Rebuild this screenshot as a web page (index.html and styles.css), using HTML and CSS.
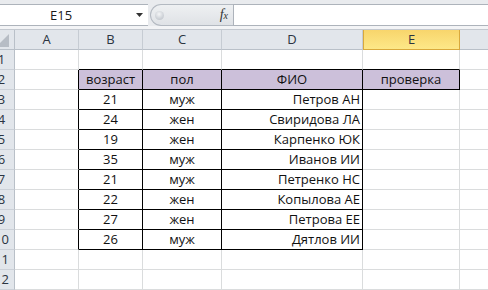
FILE: index.html
```html
<!DOCTYPE html>
<html lang="ru">
<head>
  <meta charset="UTF-8" />
  <title>Лист1 - Excel</title>
  <link rel="stylesheet" href="styles.css">
</head>
<body>
  <div class="formula-bar">
    <div class="name-box">
      <span class="cell-ref">E15</span>
      <svg class="caret" width="7" height="4" viewBox="0 0 7 4"><path d="M0 0h7L3.5 4z"/></svg>
    </div>
    <div class="fx-box">
      <span class="knob"></span>
      <span class="fx"><i>f</i><i class="x">x</i></span>
    </div>
    <div class="formula-input"></div>
  </div>
  <div class="strip"></div>

  <div class="sheet">
    <!-- column headers (F is mostly off screen) -->
    <div class="corner"><svg width="13" height="13" viewBox="0 0 13 13"><path d="M13 0v13H0z"/></svg></div>
    <div class="ch">A</div>
    <div class="ch">B</div>
    <div class="ch">C</div>
    <div class="ch">D</div>
    <div class="ch on">E</div>
    <div class="ch"></div>

    <div class="rh">1</div>
    <div class="c"></div>
    <div class="c top"></div>
    <div class="c top"></div>
    <div class="c top"></div>
    <div class="c top"></div>
    <div class="c"></div>

    <div class="rh">2</div>
    <div class="c lead"></div>
    <div class="c box head mid">возраст</div>
    <div class="c box head mid">пол</div>
    <div class="c box head mid">ФИО</div>
    <div class="c box head mid">проверка</div>
    <div class="c"></div>

    <div class="rh">3</div>
    <div class="c lead"></div>
    <div class="c box mid">21</div>
    <div class="c box mid">муж</div>
    <div class="c box name">Петров АН</div>
    <div class="c"></div>
    <div class="c"></div>

    <div class="rh">4</div>
    <div class="c lead"></div>
    <div class="c box mid">24</div>
    <div class="c box mid">жен</div>
    <div class="c box name">Свиридова ЛА</div>
    <div class="c"></div>
    <div class="c"></div>

    <div class="rh">5</div>
    <div class="c lead"></div>
    <div class="c box mid">19</div>
    <div class="c box mid">жен</div>
    <div class="c box name">Карпенко ЮК</div>
    <div class="c"></div>
    <div class="c"></div>

    <div class="rh">6</div>
    <div class="c lead"></div>
    <div class="c box mid">35</div>
    <div class="c box mid">муж</div>
    <div class="c box name">Иванов ИИ</div>
    <div class="c"></div>
    <div class="c"></div>

    <div class="rh">7</div>
    <div class="c lead"></div>
    <div class="c box mid">21</div>
    <div class="c box mid">муж</div>
    <div class="c box name">Петренко НС</div>
    <div class="c"></div>
    <div class="c"></div>

    <div class="rh">8</div>
    <div class="c lead"></div>
    <div class="c box mid">22</div>
    <div class="c box mid">жен</div>
    <div class="c box name">Копылова АЕ</div>
    <div class="c"></div>
    <div class="c"></div>

    <div class="rh">9</div>
    <div class="c lead"></div>
    <div class="c box mid">27</div>
    <div class="c box mid">жен</div>
    <div class="c box name">Петрова ЕЕ</div>
    <div class="c"></div>
    <div class="c"></div>

    <div class="rh">10</div>
    <div class="c lead"></div>
    <div class="c box mid">26</div>
    <div class="c box mid">муж</div>
    <div class="c box name">Дятлов ИИ</div>
    <div class="c"></div>
    <div class="c"></div>

    <div class="rh">11</div>
    <div class="c"></div>
    <div class="c"></div>
    <div class="c"></div>
    <div class="c"></div>
    <div class="c"></div>
    <div class="c"></div>

    <div class="rh">12</div>
    <div class="c"></div>
    <div class="c"></div>
    <div class="c"></div>
    <div class="c"></div>
    <div class="c"></div>
    <div class="c"></div>
  </div>
</body>
</html>
```

FILE: styles.css
```css
body {
  margin: 0;
  width: 488px;
  height: 290px;
  overflow: hidden;
  background-color: #fff;
  font-family: "Open Sans", "Liberation Sans", sans-serif;
  font-size: 13px;
  color: #111;
}

/* formula bar */
.formula-bar {
  display: flex;
  height: 26px;
  padding-top: 4px;
  box-sizing: border-box;
  background-color: #e9ebee;
}

.name-box {
  display: flex;
  align-items: center;
  width: 148px;
  height: 22px;
  box-sizing: border-box;
  border-top: 1px solid #adb3bb;
  border-bottom: 1px solid #adb3bb;
  background-color: #fff;
}

.cell-ref {
  margin-left: 50px;
  line-height: 20px;
  color: #1a1a1a;
}

.caret {
  margin-left: auto;
  margin-right: 5px;
  fill: #333;
}

.fx-box {
  display: flex;
  align-items: center;
  width: 83px;
  height: 22px;
  margin-left: 2px;
  box-sizing: border-box;
  border: 1px solid #b3b9c1;
  border-right: none;
  border-radius: 11px 0 0 11px;
  background: linear-gradient(#eef0f2, #dfe2e6);
}

.knob {
  width: 9px;
  height: 9px;
  margin-left: 4px;
  border-radius: 50%;
  background: radial-gradient(circle at 45% 35%, #f4f5f7 0, #d0d4d9 55%, #b8bec6 100%);
}

.fx {
  margin-left: auto;
  margin-right: 5px;
  font-family: "Liberation Serif", "DejaVu Serif", serif;
  font-size: 14px;
  line-height: 14px;
  color: #333;
}

.fx .x {
  font-size: 10px;
}

.formula-input {
  flex: 1;
  height: 22px;
  box-sizing: border-box;
  border: 1px solid #adb3bb;
  border-right: none;
  background-color: #fff;
}

.strip {
  height: 3px;
  background-color: #f3f4f6;
  border-bottom: 1px solid #c3c8cf;
}

/* grid */
.sheet {
  display: grid;
  grid-template-columns: 26px 64px 64px 79px 141px 97px 64px;
  grid-auto-rows: 20px;
  margin-left: -11px;
}

.sheet > div {
  box-sizing: border-box;
  padding: 0 2px;
  line-height: 19px;
  white-space: nowrap;
  overflow: hidden;
}

.corner {
  display: flex;
  align-items: flex-end;
  justify-content: flex-end;
  background-color: #e2e6eb;
  border-right: 1px solid #b9c0c8;
  border-bottom: 1px solid #b9c0c8;
}

.corner svg {
  margin: 0 3px 2px 0;
  fill: #b7bdc5;
}

.ch {
  text-align: center;
  color: #2b3441;
  background-color: #e2e6eb;
  border-right: 1px solid #c6ccd3;
  border-bottom: 1px solid #b9c0c8;
}

.ch.on {
  background: linear-gradient(#f8d56c, #fde888);
  border: 1px solid #d9a93c;
  border-top: none;
  line-height: 19px;
}

.rh {
  text-align: center;
  color: #2b3441;
  background-color: #e2e6eb;
  border-right: 1px solid #b9c0c8;
  border-bottom: 1px solid #ccd1d8;
}

.c {
  border-right: 1px solid #dadcdd;
  border-bottom: 1px solid #dadcdd;
}

.c.top {
  border-bottom-color: #000;
}

.c.lead {
  border-right-color: #000;
}

.c.box {
  border-right-color: #000;
  border-bottom-color: #000;
}

.head {
  background-color: #ccc0da;
}

.mid {
  text-align: center;
}

.name {
  text-align: right;
}
```
